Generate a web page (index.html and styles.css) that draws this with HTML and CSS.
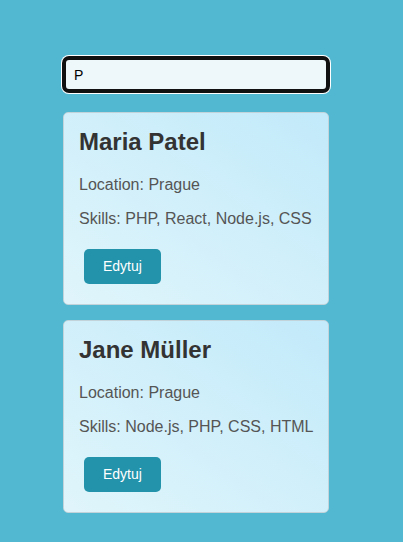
FILE: index.html
```html
<!DOCTYPE html>
<html lang="pl">
<head>
<meta charset="utf-8">
<title>Profiles</title>
<link rel="stylesheet" href="styles.css">
</head>
<body>
<div class="app">
  <input class="search" type="text" value="P" autofocus>
  <div class="card">
    <h2 class="name">Maria Patel</h2>
    <p class="info">Location: Prague</p>
    <p class="info">Skills: PHP, React, Node.js, CSS</p>
    <button class="edit">Edytuj</button>
  </div>
  <div class="card">
    <h2 class="name">Jane Müller</h2>
    <p class="info">Location: Prague</p>
    <p class="info">Skills: Node.js, PHP, CSS, HTML</p>
    <button class="edit">Edytuj</button>
  </div>
</div>
</body>
</html>
```

FILE: styles.css
```css
html, body {
  margin: 0;
  padding: 0;
  background: #52b8d2;
  font-family: "Liberation Sans", Arial, sans-serif;
}

.app {
  width: 266px;
  padding: 57px 0 0 63px;
  display: flex;
  flex-direction: column;
}

.search {
  box-sizing: border-box;
  width: 266px;
  height: 35px;
  margin: 0 0 20px 0;
  padding: 0 8px;
  border: 3px solid #111;
  border-radius: 6px;
  box-shadow: 0 0 0 1px #111, 0 0 0 2px #fff;
  outline: none;
  background: #eef7fa;
  font-family: "Liberation Sans", Arial, sans-serif;
  font-size: 14px;
  color: #000;
  caret-color: #000;
}

.card {
  box-sizing: border-box;
  width: 266px;
  margin-bottom: 15px;
  padding: 15px 12px 15px 15px;
  border: 1px solid #c2d4da;
  border-radius: 5px;
  background: linear-gradient(to top right, #e0f5fb, #c2eafa);
}

.name {
  margin: 0 0 20px 0;
  font-size: 24px;
  font-weight: bold;
  color: #333;
}

.info {
  margin: 16px 0;
  font-size: 16px;
  color: #555;
  white-space: nowrap;
}

.edit {
  display: inline-block;
  vertical-align: top;
  margin: 5px;
  padding: 9px 19px;
  border: none;
  border-radius: 5px;
  background: #2293aa;
  color: #fff;
  font-family: "Liberation Sans", Arial, sans-serif;
  font-size: 14px;
  line-height: 17px;
  cursor: pointer;
}
```
